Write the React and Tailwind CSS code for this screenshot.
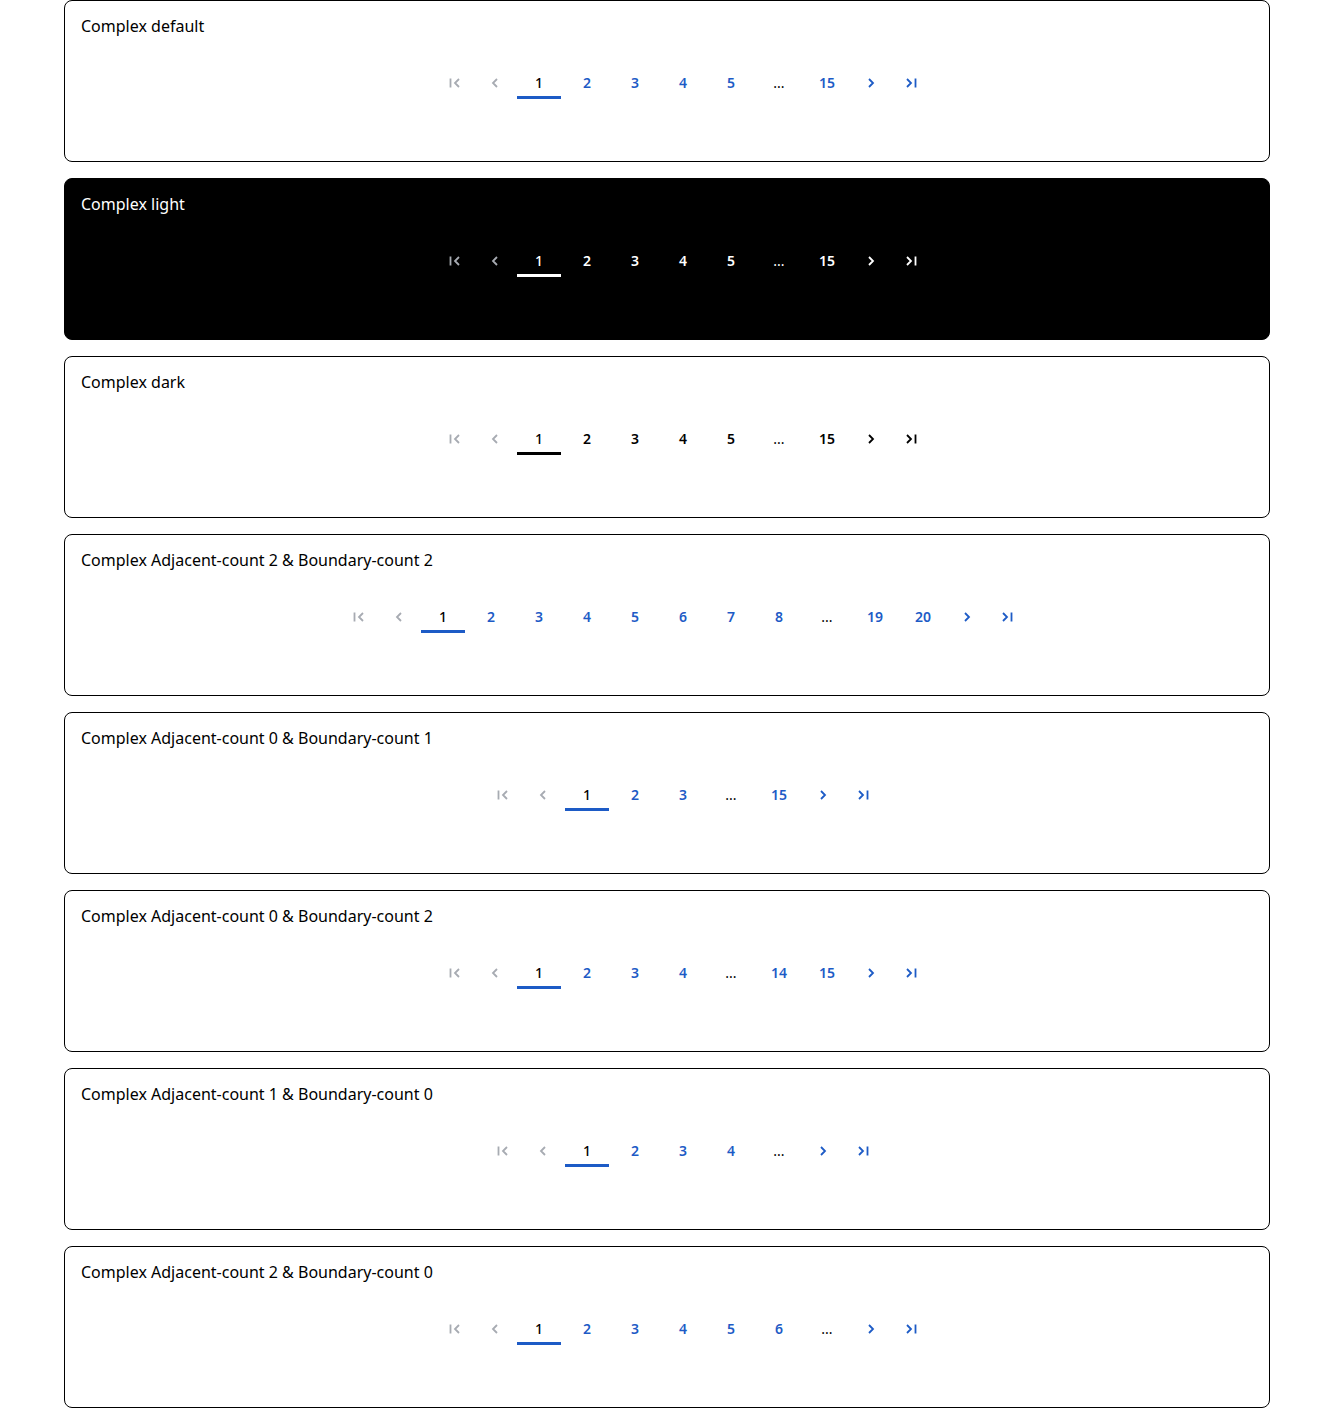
import React from 'react';

const themes = {
  default: {
    card: 'bg-white border border-black text-black',
    num: 'text-[#1d5bc6]',
    current: 'text-black',
    bar: 'bg-[#1d5bc6]',
    dots: 'text-black',
    off: 'text-[#a7abb2]',
    on: 'text-[#1d5bc6]',
  },
  light: {
    card: 'bg-black border border-black text-white',
    num: 'text-white',
    current: 'text-white',
    bar: 'bg-white',
    dots: 'text-white',
    off: 'text-[#a7abb2]',
    on: 'text-white',
  },
  dark: {
    card: 'bg-white border border-black text-black',
    num: 'text-black',
    current: 'text-black',
    bar: 'bg-black',
    dots: 'text-black',
    off: 'text-[#a7abb2]',
    on: 'text-black',
  },
};

function FirstIcon() {
  return (
    <svg width="14" height="12" viewBox="0 0 14 12" fill="none" stroke="currentColor" strokeWidth="1.8">
      <path d="M2.5 1.5v9" />
      <path d="M11 2L7 6l4 4" />
    </svg>
  );
}
function PrevIcon() {
  return (
    <svg width="10" height="12" viewBox="0 0 10 12" fill="none" stroke="currentColor" strokeWidth="1.8">
      <path d="M7 2L3 6l4 4" />
    </svg>
  );
}
function NextIcon() {
  return (
    <svg width="10" height="12" viewBox="0 0 10 12" fill="none" stroke="currentColor" strokeWidth="1.8">
      <path d="M3 2l4 4-4 4" />
    </svg>
  );
}
function LastIcon() {
  return (
    <svg width="14" height="12" viewBox="0 0 14 12" fill="none" stroke="currentColor" strokeWidth="1.8">
      <path d="M3 2l4 4-4 4" />
      <path d="M11.5 1.5v9" />
    </svg>
  );
}

function Pager({ pages, theme }) {
  const t = themes[theme];
  return (
    <div className="flex items-center justify-center gap-1 ml-8">
      <span className={`w-9 h-8 flex items-center justify-center ${t.off}`}><FirstIcon /></span>
      <span className={`w-9 h-8 flex items-center justify-center ${t.off}`}><PrevIcon /></span>
      {pages.map((p, i) =>
        p === '...' ? (
          <span key={i} className={`w-11 h-8 flex items-center justify-center text-sm ${t.dots}`}>...</span>
        ) : (
          <span key={i} className={`relative w-11 h-8 flex items-center justify-center text-sm ${p === 1 ? `font-medium ${t.current}` : `font-semibold ${t.num}`}`}>
            {p}
            {p === 1 && <span className={`absolute left-0 right-0 bottom-0 h-[3px] ${t.bar}`} />}
          </span>
        )
      )}
      <span className={`w-9 h-8 flex items-center justify-center ${t.on}`}><NextIcon /></span>
      <span className={`w-9 h-8 flex items-center justify-center ${t.on}`}><LastIcon /></span>
    </div>
  );
}

const examples = [
  { title: 'Complex default', theme: 'default', pages: [1, 2, 3, 4, 5, '...', 15] },
  { title: 'Complex light', theme: 'light', pages: [1, 2, 3, 4, 5, '...', 15] },
  { title: 'Complex dark', theme: 'dark', pages: [1, 2, 3, 4, 5, '...', 15] },
  { title: 'Complex Adjacent-count 2 & Boundary-count 2', theme: 'default', pages: [1, 2, 3, 4, 5, 6, 7, 8, '...', 19, 20] },
  { title: 'Complex Adjacent-count 0 & Boundary-count 1', theme: 'default', pages: [1, 2, 3, '...', 15] },
  { title: 'Complex Adjacent-count 0 & Boundary-count 2', theme: 'default', pages: [1, 2, 3, 4, '...', 14, 15] },
  { title: 'Complex Adjacent-count 1 & Boundary-count 0', theme: 'default', pages: [1, 2, 3, 4, '...'] },
  { title: 'Complex Adjacent-count 2 & Boundary-count 0', theme: 'default', pages: [1, 2, 3, 4, 5, 6, '...'] },
];

export default function App() {
  return (
    <div className="bg-white px-16 flex flex-col gap-4" style={{ fontFamily: '"Noto Sans", "Open Sans", sans-serif' }}>
      {examples.map((ex) => (
        <div key={ex.title} className={`h-[162px] rounded-lg px-4 pt-[13px] ${themes[ex.theme].card}`}>
          <div className="text-base leading-6">{ex.title}</div>
          <div className="mt-[29px]">
            <Pager pages={ex.pages} theme={ex.theme} />
          </div>
        </div>
      ))}
    </div>
  );
}
